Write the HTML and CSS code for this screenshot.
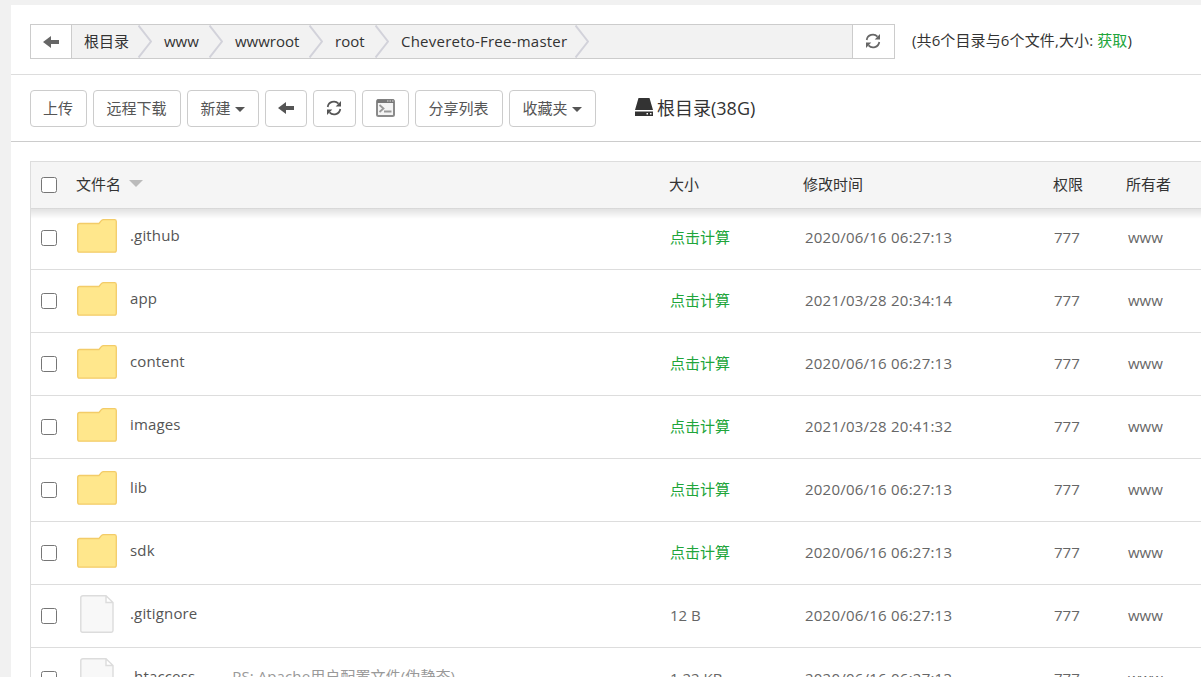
FILE: index.html
```
<!DOCTYPE html>
<html lang="zh-CN">
<head>
  <meta charset="UTF-8">
  <title>文件</title>
  <link rel="stylesheet" href="styles.css">
</head>
<body>
  <svg class="sprite">
    <symbol id="i-back" viewBox="0 0 16 14"><path d="M0 7L8 1v4h8v4H8v4z"/></symbol>
    <symbol id="i-refresh" viewBox="0 0 16 16"><path d="M1.700 7A6.300 6.300 0 0 1 12.500 3.600M14.300 9A6.300 6.300 0 0 1 3.500 12.400" fill="none" stroke="currentColor" stroke-width="1.700"/><path d="M15 .9v5.500H9.700zM1 15.100V9.600h5.300z"/></symbol>
    <symbol id="i-chevron" viewBox="0 0 14 33"><path d="M.5 .5l12.500 16-12.500 16" fill="none" stroke="#d2d2da" stroke-width="2"/></symbol>
    <symbol id="i-folder" viewBox="0 0 40 34"><path d="M.7 6.500Q.7 4.500 2.700 4.500H22L24.500 1.400Q25.300 .7 26.500 .7H37.500Q39.300 .7 39.300 2.500V31.300Q39.300 33.200 37.500 33.200H2.500Q.7 33.200 .7 31.300z" fill="#ffe78c" stroke="#f3cc68" stroke-width="1.300"/></symbol>
    <symbol id="i-file" viewBox="0 0 34 38"><path d="M3 .8H26L33 7.500V35.500Q33 37.200 31.300 37.200H2.500Q.8 37.200 .8 35.500V2.500Q.8 .8 3 .8zM26 .8V7.500H33" fill="#f8f8f8" stroke="#dcdcdc" stroke-width="1.400"/></symbol>
  </svg>
  <div class="main">
    <div class="path-row">
      <div class="path-bar">
        <a class="path-btn"><svg class="ico-back"><use href="#i-back"/></svg></a>
        <ul class="crumbs">
          <li class="c1"><span>根目录</span><svg><use href="#i-chevron"/></svg></li>
          <li class="c2"><span>www</span><svg><use href="#i-chevron"/></svg></li>
          <li class="c3"><span>wwwroot</span><svg><use href="#i-chevron"/></svg></li>
          <li class="c4"><span>root</span><svg><use href="#i-chevron"/></svg></li>
          <li class="c5"><span>Chevereto-Free-master</span><svg><use href="#i-chevron"/></svg></li>
        </ul>
        <a class="path-btn refresh"><svg class="ico-refresh"><use href="#i-refresh"/></svg></a>
      </div>
      <div class="info">(共6个目录与6个文件,大小: <a class="green">获取</a>)</div>
    </div>

    <div class="toolbar">
      <button class="b1">上传</button>
      <button class="b2">远程下载</button>
      <button class="b3">新建<i class="caret"></i></button>
      <button class="b4"><svg class="ico-back"><use href="#i-back"/></svg></button>
      <button class="b5"><svg class="ico-refresh"><use href="#i-refresh"/></svg></button>
      <button class="b6">
        <svg class="ico-term" viewBox="0 0 19 18"><rect x="1" y="1" width="17" height="16" rx="1.500" fill="#f4f4f4" stroke="#8a8a8a" stroke-width="2"/><path d="M1 .5h17v3.500H1z" fill="#777"/><path d="M11 2h1.500M13.500 2H15M16 2h1.500" stroke="#ddd"/><path d="M3.500 6l4 3.500-4 3.500M8 12.500h7.500" fill="none" stroke="#999" stroke-width="1.800"/></svg>
      </button>
      <button class="b2">分享列表</button>
      <button class="b7">收藏夹<i class="caret"></i></button>
      <div class="disk">
        <svg viewBox="0 0 18 18"><path d="M3.500 0h11L18 12H0zM0 13.500h18V18H0z" fill="#333"/><path d="M11.500 15h1.500v1.500h-1.500zM15 15h1.500v1.500H15z" fill="#fff"/></svg>
        <span>根目录(38G)</span>
      </div>
    </div>

    <div class="files">
      <div class="row head">
        <input type="checkbox">
        <div class="name">文件名<i class="sort"></i></div>
        <div>大小</div><div>修改时间</div><div>权限</div><div>所有者</div>
      </div>
      <div class="row first">
        <input type="checkbox">
        <div class="name"><svg class="folder"><use href="#i-folder"/></svg><span>.github</span></div>
        <div class="green">点击计算</div><div class="time">2020/06/16 06:27:13</div><div>777</div><div>www</div>
      </div>
      <div class="row">
        <input type="checkbox">
        <div class="name"><svg class="folder"><use href="#i-folder"/></svg><span>app</span></div>
        <div class="green">点击计算</div><div class="time">2021/03/28 20:34:14</div><div>777</div><div>www</div>
      </div>
      <div class="row">
        <input type="checkbox">
        <div class="name"><svg class="folder"><use href="#i-folder"/></svg><span>content</span></div>
        <div class="green">点击计算</div><div class="time">2020/06/16 06:27:13</div><div>777</div><div>www</div>
      </div>
      <div class="row">
        <input type="checkbox">
        <div class="name"><svg class="folder"><use href="#i-folder"/></svg><span>images</span></div>
        <div class="green">点击计算</div><div class="time">2021/03/28 20:41:32</div><div>777</div><div>www</div>
      </div>
      <div class="row">
        <input type="checkbox">
        <div class="name"><svg class="folder"><use href="#i-folder"/></svg><span>lib</span></div>
        <div class="green">点击计算</div><div class="time">2020/06/16 06:27:13</div><div>777</div><div>www</div>
      </div>
      <div class="row">
        <input type="checkbox">
        <div class="name"><svg class="folder"><use href="#i-folder"/></svg><span>sdk</span></div>
        <div class="green">点击计算</div><div class="time">2020/06/16 06:27:13</div><div>777</div><div>www</div>
      </div>
      <div class="row">
        <input type="checkbox">
        <div class="name"><svg class="file"><use href="#i-file"/></svg><span>.gitignore</span></div>
        <div>12 B</div><div class="time">2020/06/16 06:27:13</div><div>777</div><div>www</div>
      </div>
      <div class="row">
        <input type="checkbox">
        <div class="name"><svg class="file"><use href="#i-file"/></svg><span>.htaccess</span><em>PS: Apache用户配置文件(伪静态)</em></div>
        <div>1.22 KB</div><div class="time">2020/06/16 06:27:13</div><div>777</div><div>www</div>
      </div>
    </div>
  </div>
</body>
</html>
```

FILE: styles.css
```
* {
  box-sizing: border-box;
}
body {
  margin: 0;
  padding: 5px 0 0 11px;
  height: 677px;
  overflow: hidden;
  background: #f1f1f1;
  color: #333;
  font-family: "Open Sans", "Noto Sans CJK SC", sans-serif;
  font-size: 15px;
  line-height: 20px;
}
svg {
  display: block;
  fill: currentColor;
  flex: none;
}
.sprite {
  display: none;
}
.green {
  color: #20a53a;
}
.main {
  height: 672px;
  overflow: hidden;
  background: #fff;
}
.path-row {
  display: flex;
  height: 70px;
  padding: 19px 0 0 19px;
  border-bottom: 1px solid #ddd;
}
.path-bar {
  display: flex;
  width: 865px;
  height: 35px;
  border: 1px solid #ccc;
  background: #f2f2f2;
}
.path-btn {
  display: flex;
  align-items: center;
  justify-content: center;
  width: 41px;
  background: #fff;
  border-right: 1px solid #ccc;
  color: #666;
}
.path-btn.refresh {
  width: 42px;
  padding: 0 1px 2px 0;
  border-right: 0;
  border-left: 1px solid #ccc;
}
.ico-back {
  width: 16px;
  height: 14px;
}
.ico-refresh {
  width: 16px;
  height: 16px;
}
.crumbs {
  display: flex;
  flex: 1;
  margin: 0;
  padding: 0;
  list-style: none;
}
.crumbs li {
  display: flex;
  align-items: center;
  justify-content: space-between;
  padding-left: 12px;
  white-space: nowrap;
}
.crumbs span {
  padding-bottom: 2px;
}
.crumbs svg {
  width: 14px;
  height: 33px;
}
.c1 { width: 80px; }
.c2 { width: 71px; }
.c3 { width: 100px; }
.c4 { width: 66px; }
.c5 { width: 200px; letter-spacing: 0.23px; }
.info {
  padding: 6px 0 0 17px;
  letter-spacing: 0.12px;
}
.toolbar {
  display: flex;
  gap: 6px;
  height: 67px;
  padding: 15px 0 0 19px;
  border-bottom: 1px solid #ccc;
}
.toolbar button {
  display: flex;
  align-items: center;
  justify-content: center;
  height: 37px;
  padding: 0 1px 1px 0;
  background: #fff;
  border: 1px solid #ccc;
  border-radius: 4px;
  color: #555;
  font: inherit;
}
.b1 { width: 57px; }
.b2 { width: 88px; }
.b3 { width: 72px; }
.b4 { width: 42px; }
.b5 { width: 43px; }
.b6 { width: 47px; }
.b7 { width: 87px; }
.caret {
  margin: 3px 0 0 4px;
  border: 5px solid transparent;
  border-top-color: #555;
  border-bottom: 0;
}
.ico-term {
  width: 19px;
  height: 18px;
}
.disk {
  display: flex;
  height: 37px;
  padding-left: 33px;
  font-size: 18px;
}
.disk svg {
  width: 18px;
  height: 18px;
  margin: 8px 4px 0 0;
}
.disk span {
  padding-top: 8px;
}
.files {
  margin: 19px 0 0 19px;
  border: 1px solid #ddd;
  border-right: 0;
  color: #666;
}
.row {
  display: grid;
  grid-template-columns: 46px 593px 135px 249px 74px 81px;
  height: 63px;
  border-bottom: 1px solid #ddd;
}
.row > div {
  padding-top: 20px;
}
.row > .time {
  letter-spacing: 0.23px;
}
.row input {
  width: 16px;
  height: 16px;
  margin: 23px 0 0 10px;
}
.row.first {
  height: 61px;
}
.row.first > div {
  padding-top: 18px;
}
.row.first input {
  margin-top: 21px;
}
.row.head {
  position: relative;
  grid-template-columns: 45px 593px 134px 250px 73px 81px;
  height: 47px;
  background: #f5f5f5;
  border-bottom: 0;
  color: #333;
}
/* soft shadow under the fixed header */
.row.head::after {
  content: "";
  position: absolute;
  top: 46px;
  left: 0;
  right: 0;
  height: 11px;
  background: linear-gradient(rgba(0, 0, 0, 0.12), rgba(0, 0, 0, 0.09) 30%, transparent);
}
.row.head > div {
  padding-top: 12px;
}
.row.head input {
  margin-top: 15px;
}
.row > .name {
  display: flex;
  padding-top: 0;
  color: #555;
}
.row.first > .name {
  padding-top: 0;
  margin-top: -2px;
}
.row.head > .name {
  padding-top: 12px;
  color: #333;
}
.sort {
  width: 0;
  height: 0;
  margin: 6px 0 0 8px;
  border: 7px solid transparent;
  border-top-color: #bbb;
  border-bottom: 0;
}
.folder {
  width: 40px;
  height: 34px;
  margin: 12px 13px 0 0;
}
.file {
  width: 34px;
  height: 38px;
  margin: 10px 16px 0 3px;
}
.name span {
  padding-top: 18px;
  letter-spacing: 0.15px;
}
.name em {
  padding: 18px 0 0 37px;
  color: #999;
  font-style: normal;
  letter-spacing: 0.1px;
}
```
